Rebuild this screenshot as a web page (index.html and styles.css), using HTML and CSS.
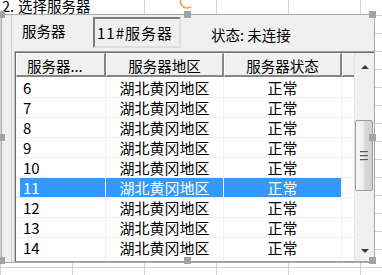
FILE: index.html
```html
<!DOCTYPE html>
<html lang="zh-CN">
<head>
<meta charset="utf-8">
<title>选择服务器</title>
<link rel="stylesheet" href="styles.css">
</head>
<body>
<div class="caption"><span class="num">2.</span>选择服务器</div>
<svg class="rotate" width="18" height="18" viewBox="0 0 18 18"><path d="M15.1 7.3 A6.5 6.5 0 1 0 13.2 14.5" fill="none" stroke="#f0a030" stroke-width="1.6"/></svg>
<div class="form">
  <div class="frame">
    <div class="toprow">
      <div class="lbl">服务器</div>
      <div class="textbox">11#服务器</div>
      <div class="status">状态: 未连接</div>
    </div>
    <div class="listview">
      <div class="lv-inner">
        <div class="table">
          <div class="header">
            <div class="hcell c1">服务器...</div>
            <div class="hcell c2">服务器地区</div>
            <div class="hcell c3">服务器状态</div>
            <div class="hcell cf"></div>
          </div>
          <div class="body">
            <div class="row"><div class="cell c1">6</div><div class="cell c2">湖北黄冈地区</div><div class="cell c3">正常</div><div class="cell cf"></div></div>
            <div class="row"><div class="cell c1">7</div><div class="cell c2">湖北黄冈地区</div><div class="cell c3">正常</div><div class="cell cf"></div></div>
            <div class="row"><div class="cell c1">8</div><div class="cell c2">湖北黄冈地区</div><div class="cell c3">正常</div><div class="cell cf"></div></div>
            <div class="row"><div class="cell c1">9</div><div class="cell c2">湖北黄冈地区</div><div class="cell c3">正常</div><div class="cell cf"></div></div>
            <div class="row"><div class="cell c1">10</div><div class="cell c2">湖北黄冈地区</div><div class="cell c3">正常</div><div class="cell cf"></div></div>
            <div class="row sel"><div class="cell c1">11</div><div class="cell c2">湖北黄冈地区</div><div class="cell c3">正常</div><div class="cell cf"></div></div>
            <div class="row"><div class="cell c1">12</div><div class="cell c2">湖北黄冈地区</div><div class="cell c3">正常</div><div class="cell cf"></div></div>
            <div class="row"><div class="cell c1">13</div><div class="cell c2">湖北黄冈地区</div><div class="cell c3">正常</div><div class="cell cf"></div></div>
            <div class="row"><div class="cell c1">14</div><div class="cell c2">湖北黄冈地区</div><div class="cell c3">正常</div><div class="cell cf"></div></div>
            <div class="row"><div class="cell c1">15</div><div class="cell c2">湖北黄冈地区</div><div class="cell c3">正常</div><div class="cell cf"></div></div>
          </div>
        </div>
        <div class="vscroll">
          <div class="sb-btn up"><span class="arrow-up"></span></div>
          <div class="sb-track">
            <div class="thumb"><span class="grip"></span><span class="grip"></span><span class="grip"></span></div>
          </div>
          <div class="sb-btn down"><span class="arrow-down"></span></div>
        </div>
      </div>
    </div>
  </div>
</div>
<div class="handle h-tl"></div>
<div class="handle h-tm"></div>
<div class="handle h-tr"></div>
<div class="handle h-ml"></div>
<div class="handle h-mr"></div>
<div class="handle h-bl"></div>
<div class="handle h-bm"></div>
<div class="handle h-br"></div>
</body>
</html>
```

FILE: styles.css
```css
html, body {
  margin: 0;
  padding: 0;
}
body {
  width: 382px;
  height: 275px;
  overflow: hidden;
  position: relative;
  background-color: #fff;
  background-image:
    linear-gradient(to right, transparent 71px, #d4d4d4 71px),
    linear-gradient(to bottom, transparent 17px, #d4d4d4 17px);
  background-size: 72px 100%, 100% 18px;
  background-position: 1px 0, 0 -2px;
  font-family: "Noto Sans CJK SC", "Noto Sans", sans-serif;
  color: #000;
}

.caption {
  position: absolute;
  left: 0;
  top: 0;
  width: 94px;
  height: 14px;
  padding-left: 2px;
  background: #fff;
  font-size: 14.5px;
  line-height: 12px;
  white-space: nowrap;
}
.num {
  display: inline-block;
  width: 16px;
}

.rotate {
  position: absolute;
  left: 178px;
  top: -8px;
}

.form {
  position: absolute;
  left: 1px;
  top: 14px;
  width: 374px;
  height: 249px;
  box-sizing: border-box;
  border: 1px solid #a9a9a9;
  background: #f0f0f0;
}
.frame {
  margin-left: 9px;
  height: 100%;
  border-left: 1px solid #cdcdcd;
  display: flex;
  flex-direction: column;
}

.toprow {
  height: 36px;
  flex: none;
  display: flex;
  align-items: flex-start;
}
.lbl {
  width: 71px;
  padding-left: 10px;
  margin-top: 6px;
  font-size: 14.5px;
  line-height: 20px;
}
.textbox {
  box-sizing: border-box;
  width: 88px;
  height: 31px;
  margin-top: 2px;
  border: 2px solid;
  border-color: #7d7d7d #dedede #dedede #7d7d7d;
  background: #f0f0f0;
  font-size: 15px;
  letter-spacing: 1px;
  padding-left: 2px;
  display: flex;
  align-items: center;
  white-space: nowrap;
}
.status {
  margin-left: 30px;
  margin-top: 10px;
  font-size: 14.5px;
  line-height: 20px;
  white-space: nowrap;
}

.listview {
  margin-left: 2px;
  height: 211px;
  flex: none;
  box-sizing: border-box;
  border-top: 1px solid #a0a0a0;
  border-left: 1px solid #c4c4c4;
  border-bottom: 1px solid #a0a0a0;
}
.lv-inner {
  height: 100%;
  box-sizing: border-box;
  border-top: 1px solid #6d6d6d;
  border-left: 1px solid #6d6d6d;
  display: flex;
  background: #fff;
}
.table {
  width: 338px;
  flex: none;
  display: flex;
  flex-direction: column;
  overflow: hidden;
}
.header {
  display: flex;
  height: 24px;
  flex: none;
}
.hcell {
  box-sizing: border-box;
  height: 24px;
  background: #f0f0f0;
  border-top: 1px solid #fff;
  border-left: 1px solid #fff;
  border-right: 2px solid #858585;
  border-bottom: 2px solid #858585;
  font-size: 14.5px;
  line-height: 19px;
  padding-top: 2px;
  text-align: center;
  white-space: nowrap;
}
.hcell.c1 {
  text-align: left;
  padding-left: 10px;
}
.c1 { width: 90px; }
.c2 { width: 118px; }
.c3 { width: 118px; }
.cf { width: 12px; }
.hcell.cf { border-right: none; }

.body {
  flex: 1;
  padding-top: 1px;
  overflow: hidden;
}
.row {
  display: flex;
  height: 20px;
  box-sizing: border-box;
  border-bottom: 1px solid #f0f0f0;
  font-size: 15px;
  line-height: 19px;
}
.cell {
  box-sizing: border-box;
  flex: none;
  border-right: 1px solid #f0f0f0;
  text-align: center;
  white-space: nowrap;
}
.cell.c1 {
  padding-left: 7px;
  text-align: left;
}
.cell.cf { border-right: none; }
.row.sel .cell.c2,
.row.sel .cell.c3 {
  background: #3399ff;
  color: #fff;
}
.row.sel .cell.c1 {
  background: linear-gradient(to right, #fff 4px, #3399ff 4px);
  color: #fff;
}

.vscroll {
  width: 20px;
  flex: none;
  box-sizing: border-box;
  border-left: 1px solid #e4e4e4;
  background: #f0f0f0;
  display: flex;
  flex-direction: column;
}
.sb-btn {
  flex: none;
  display: flex;
  align-items: center;
  justify-content: center;
}
.sb-btn.up { height: 27px; }
.sb-btn.down { height: 21px; }
.sb-track { flex: 1; }
.arrow-up {
  width: 0;
  height: 0;
  border-left: 4px solid transparent;
  border-right: 4px solid transparent;
  border-bottom: 4px solid #3a3a3a;
}
.arrow-down {
  width: 0;
  height: 0;
  border-left: 4px solid transparent;
  border-right: 4px solid transparent;
  border-top: 4px solid #3a3a3a;
}
.thumb {
  box-sizing: border-box;
  width: 18px;
  height: 71px;
  margin-top: 40px;
  border: 1px solid #9c9c9c;
  border-radius: 2px;
  background: linear-gradient(to right, #fbfbfb 0%, #ececec 45%, #dadada 55%, #cfcfcf 100%);
  display: flex;
  flex-direction: column;
  align-items: center;
  justify-content: center;
  gap: 2px;
}
.grip {
  display: block;
  width: 8px;
  height: 2px;
  background: #5a5a5a;
  border-bottom: 1px solid #c8c8c8;
  box-sizing: border-box;
}

.handle {
  position: absolute;
  width: 7px;
  height: 7px;
  background: #a2a2a8;
}
.h-tl { left: -2px; top: 11px; }
.h-tm { left: 184px; top: 11px; }
.h-tr { left: 369px; top: 11px; }
.h-ml { left: -2px; top: 134px; }
.h-mr { left: 369px; top: 134px; }
.h-bl { left: -2px; top: 257px; }
.h-bm { left: 184px; top: 257px; }
.h-br { left: 369px; top: 257px; }
```
